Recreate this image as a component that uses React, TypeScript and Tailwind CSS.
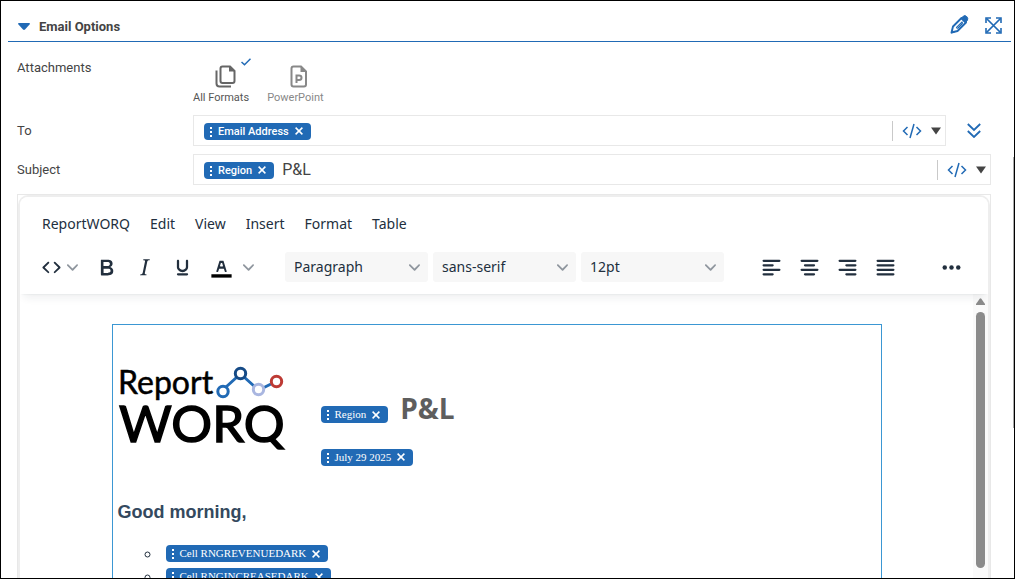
import React from 'react'
import type { ReactNode } from 'react'

const CHEVRON = 'M8.7 2.2c.3-.3.8-.3 1 0 .4.4.4.9 0 1.2L5.7 7.8c-.3.3-.9.3-1.2 0L.2 3.4a.8.8 0 0 1 0-1.2c.3-.3.8-.3 1.1 0L5 6l3.7-3.8Z'

const menus = ['ReportWORQ', 'Edit', 'View', 'Insert', 'Format', 'Table']

const formatButtons = [
  {
    label: 'Bold',
    d: 'M7.8 19c-.3 0-.5 0-.6-.2l-.2-.5V5.7c0-.2 0-.4.2-.5l.6-.2h5c1.5 0 2.7.3 3.5 1 .7.6 1.1 1.4 1.1 2.5a3 3 0 0 1-.6 1.9c-.4.6-1 1-1.6 1.2.4.1.9.3 1.3.6s.8.7 1 1.2c.4.4.5 1 .5 1.6 0 1.3-.4 2.3-1.3 3-.8.7-2.1 1-3.8 1H7.8Zm5-8.3c.6 0 1.2-.1 1.6-.5.4-.3.6-.7.6-1.3 0-1.1-.8-1.7-2.3-1.7H9.3v3.5h3.4Zm.5 6c.7 0 1.3-.1 1.7-.4.4-.4.6-.9.6-1.5s-.2-1-.7-1.4c-.4-.3-1-.4-2-.4H9.4v3.8h4Z',
  },
  {
    label: 'Italic',
    d: 'm16.7 4.7-.1.9h-.3c-.6 0-1 0-1.4.3-.3.3-.4.6-.5 1.1l-2.1 9.8v.6c0 .5.4.8 1.4.8h.2l-.2.8H8l.2-.8h.2c1.1 0 1.8-.5 2-1.5l2-9.8.1-.5c0-.6-.4-.8-1.4-.8h-.3l.2-.9h5.8Z',
  },
  {
    label: 'Underline',
    d: 'M16 5c.6 0 1 .4 1 1v5.5a4 4 0 0 1-.4 1.8l-1 1.4a5.3 5.3 0 0 1-5.5 1 5 5 0 0 1-1.6-1c-.5-.4-.8-.9-1.1-1.4a4 4 0 0 1-.4-1.8V6c0-.6.4-1 1-1s1 .4 1 1v5.5c0 .3 0 .6.2 1l.6.7a3.3 3.3 0 0 0 2.2.8 3.4 3.4 0 0 0 2.2-.8c.3-.2.4-.5.6-.8l.2-.9V6c0-.6.4-1 1-1ZM8 17h8c.6 0 1 .4 1 1s-.4 1-1 1H8a1 1 0 0 1 0-2Z',
  },
]

const TEXT_COLOR =
  'M8.7 16h-.8a.5.5 0 0 1-.5-.6l2.7-9c.1-.3.3-.4.5-.4h2.8c.2 0 .4.1.5.4l2.7 9a.5.5 0 0 1-.5.6h-.8a.5.5 0 0 1-.4-.4l-.7-2.2c0-.3-.3-.4-.5-.4h-3.4c-.2 0-.4.1-.5.4l-.7 2.2c0 .3-.2.4-.4.4Zm2.6-7.6-.6 2a.5.5 0 0 0 .5.6h1.6a.5.5 0 0 0 .5-.6l-.6-2c0-.3-.3-.4-.5-.4h-.4c-.2 0-.4.1-.5.4Z'

const SOURCE =
  'M9.8 15.7c.3.3.3.8 0 1-.3.4-.9.4-1.2 0l-4.4-4.1a.8.8 0 0 1 0-1.2l4.4-4.2c.3-.3.9-.3 1.2 0 .3.3.3.8 0 1.1L6 12l3.8 3.7ZM14.2 15.7c-.3.3-.3.8 0 1 .4.4.9.4 1.2 0l4.4-4.1c.3-.3.3-.9 0-1.2l-4.4-4.2a.8.8 0 0 0-1.2 0c-.3.3-.3.8 0 1.1L18 12l-3.8 3.7Z'

// start x and end x of the two short lines
const alignButtons = [
  { label: 'Align left', x1: 5, x2: 13 },
  { label: 'Align center', x1: 8, x2: 16 },
  { label: 'Align right', x1: 11, x2: 19 },
  { label: 'Justify', x1: 5, x2: 19 },
]

const toolbarSelects = [
  { label: 'Blocks', value: 'Paragraph' },
  { label: 'Fonts', value: 'sans-serif' },
  { label: 'Font sizes', value: '12pt' },
]

const Chip = ({ children }: { children: ReactNode }) => (
  <span className="inline-flex h-[17px] shrink-0 items-center rounded bg-[#216ab5] pl-[5px] pr-2 text-[11px] leading-none whitespace-nowrap text-white">
    <svg className="mr-[5px] h-[11px] w-1" viewBox="0 0 4 11" fill="currentColor" aria-hidden="true">
      <path d="M1 1h2v2H1zM1 5h2v2H1zM1 9h2v2H1z" />
    </svg>
    {children}
    <button type="button" aria-label="Remove" className="ml-1.5">
      <svg className="h-2 w-2" viewBox="0 0 8 8" fill="none" stroke="currentColor" strokeWidth="1.5" aria-hidden="true">
        <path d="M.6.6l6.8 6.8M7.4.6L.6 7.4" />
      </svg>
    </button>
  </span>
)

const Chevron = () => (
  <svg className="h-[11px] w-[11px] shrink-0 fill-[#8f969e]" viewBox="0 0 10 10" aria-hidden="true">
    <path d={CHEVRON} />
  </svg>
)

const ToolIcon = ({ children }: { children: ReactNode }) => (
  <svg className="h-[27px] w-[27px] shrink-0" viewBox="0 0 24 24" fill="currentColor" aria-hidden="true">
    {children}
  </svg>
)

const CodeMenu = () => (
  <div className="flex h-5 items-center border-l border-[#c9c9c9] pr-1 pl-[9px]">
    <button type="button" aria-label="Insert code">
      <svg className="h-4 w-5 text-[#216ab5]" viewBox="0 0 20 16" fill="none" stroke="currentColor" strokeWidth="1.5" aria-hidden="true">
        <path d="M5.500 4L1.500 8l4 4M14.500 4l4 4-4 4M12 1L8 15" />
      </svg>
    </button>
    <button type="button" aria-label="More code options" className="ml-[9px]">
      <svg className="h-2 w-2.5 fill-[#444]" viewBox="0 0 10 8" aria-hidden="true">
        <path d="M0 .5h10L5 7.500z" />
      </svg>
    </button>
  </div>
)

const Logo = () => (
  <svg className="h-[85px] w-[170px] overflow-visible" viewBox="0 0 170 85" role="img" aria-label="ReportWORQ">
    <g fill="#000" stroke="#000" fontFamily="Lato, sans-serif">
      <text x="0" y="29" fontSize="32" strokeWidth="0.5">Report</text>
      <text x="1" y="77" fontSize="51" strokeWidth="1.500">WORQ</text>
    </g>
    <g fill="none" strokeWidth="3">
      <path d="M108 22l11-10M126 12l10 9M145 23l8-4" stroke="#216ab5" />
      <circle cx="105" cy="26.500" r="5.200" stroke="#216ab5" />
      <circle cx="122.500" cy="8.500" r="5.200" stroke="#154a86" />
      <circle cx="140.500" cy="24.500" r="5.200" stroke="#a9b6e0" />
      <circle cx="158.500" cy="16.500" r="5.200" stroke="#bd3a34" />
    </g>
  </svg>
)

const Header = () => (
  <header className="ml-[7px] mr-[3px] flex h-[41px] shrink-0 items-center border-b border-[#216ab5] pt-[11px] pl-2.5 pr-[9px]">
    <button type="button" className="flex items-center gap-[9px] text-[13px] font-bold text-[#444]">
      <svg className="h-[7px] w-3 fill-[#216ab5]" viewBox="0 0 12 7" aria-hidden="true">
        <path d="M0 1Q0 0 1 0h10q1 0 1 1L7 6.500q-1 .8-2 0z" />
      </svg>
      Email Options
    </button>
    <div className="ml-auto flex items-center gap-4 pb-1 text-[#216ab5]">
      <button type="button" aria-label="Edit">
        <svg className="h-[19px] w-[19px]" viewBox="0 0 19 19" fill="none" stroke="currentColor" aria-hidden="true">
          <path d="M1.500 17.500l1.500-6L11.500 3l4.500 4.500L7.500 16z" strokeWidth="1.900" strokeLinejoin="round" />
          <path d="M11 3.500l2.500-2.500q1.500-1 3.200.6t.8 3.400L15.500 8z" fill="currentColor" />
          <path d="M.8 18.500l1.200-4 2.800 3z" fill="currentColor" stroke="none" />
          <path d="M6.500 12.300l5.500-5.300q1 1 0 2L8 13q-1 .8-1.500-.7z" strokeWidth="1.100" />
        </svg>
      </button>
      <button type="button" aria-label="Expand" className="pt-px">
        <svg className="h-[17px] w-[17px]" viewBox="0 0 17 17" fill="none" stroke="currentColor" strokeWidth="1.600" aria-hidden="true">
          <path d="M6 1H1v5M11 1h5v5M1 11v5h5M16 11v5h-5" />
          <path d="M1.500 1.500l14 14M15.500 1.500l-14 14" strokeWidth="1.700" />
        </svg>
      </button>
    </div>
  </header>
)

const Attachments = () => (
  <div className="flex h-[73px] text-[11px] leading-4">
    <div className="w-[176px] pt-4 text-[13px] leading-5">Attachments</div>
    <div className="flex gap-[18px] pt-[23px]">
      <button type="button" aria-pressed="true" className="relative flex h-[41px] flex-col items-center justify-between text-[#555]">
        <svg className="ml-2 h-[23px] w-[21px] text-[#666]" viewBox="0 0 21 23" fill="none" stroke="currentColor" strokeWidth="2" aria-hidden="true">
          <path d="M7.500 1.500h7.500L19.500 6v10q0 2-2 2h-10q-2 0-2-2V3.500q0-2 2-2z" />
          <path d="M1.500 5.500V18.500q0 3 3 3H16" />
          <path d="M14 1v5.500h5.500z" fill="currentColor" stroke="none" />
        </svg>
        All Formats
        <svg className="absolute -top-[7px] -right-0.5 h-2 w-2.5 text-[#216ab5]" viewBox="0 0 10 8" fill="none" stroke="currentColor" strokeWidth="1.500" aria-hidden="true">
          <path d="M.5 4L3.500 6.800 9.500.8" />
        </svg>
      </button>
      <button type="button" aria-pressed="false" className="flex h-[41px] flex-col items-center justify-between text-[#888]">
        <svg className="ml-2 h-[23px] w-[18px]" viewBox="0 0 18 23" fill="none" stroke="currentColor" strokeWidth="2" aria-hidden="true">
          <path d="M3.500 1.500h7.500L16 6.500v13q0 2-2 2H3.500q-2 0-2-2v-16q0-2 2-2z" />
          <path d="M10.500 1v6h6z" fill="currentColor" stroke="none" />
          <path d="M6.500 18v-7.500h2.500q2.500 0 2.500 2.200T9 15H6.500" />
        </svg>
        PowerPoint
      </button>
    </div>
  </div>
)

const Toolbar = () => (
  <div className="flex h-[52px] items-center pb-0.5 pl-[18px]">
    <button type="button" aria-label="Source code" className="mr-[9px] flex items-center gap-0.5">
      <ToolIcon>
        <path d={SOURCE} />
      </ToolIcon>
      <Chevron />
    </button>
    {formatButtons.map((b) => (
      <button key={b.label} type="button" aria-label={b.label} className="flex w-[38px] justify-center">
        <ToolIcon>
          <path d={b.d} />
        </ToolIcon>
      </button>
    ))}
    <button type="button" aria-label="Text color" className="mr-[31px] ml-[7px] flex items-center gap-2">
      <ToolIcon>
        <path d="M3 18h18v3H3z" fill="#000" />
        <path d={TEXT_COLOR} />
      </ToolIcon>
      <Chevron />
    </button>
    <div className="flex gap-[5px]">
      {toolbarSelects.map((s) => (
        <label key={s.label} className="grid w-[143px] grid-cols-1 items-center rounded-[3px] bg-[#f7f7f7]">
          <select
            aria-label={s.label}
            className="col-start-1 row-start-1 h-[30px] w-full appearance-none bg-transparent pl-[9px] text-sm outline-none"
          >
            <option>{s.value}</option>
          </select>
          <span className="pointer-events-none col-start-1 row-start-1 mr-2 justify-self-end">
            <Chevron />
          </span>
        </label>
      ))}
    </div>
    <div className="mr-7 ml-7 flex">
      {alignButtons.map((b) => (
        <button key={b.label} type="button" aria-label={b.label} className="flex w-[38px] justify-center">
          <ToolIcon>
            <path
              d={`M5 6h14M${b.x1} 10H${b.x2}M5 14h14M${b.x1} 18H${b.x2}`}
              stroke="currentColor"
              strokeWidth="2"
              strokeLinecap="round"
            />
          </ToolIcon>
        </button>
      ))}
    </div>
    <button type="button" aria-label="More" className="flex w-[38px] justify-center">
      <ToolIcon>
        <circle cx="6" cy="12" r="2" />
        <circle cx="12" cy="12" r="2" />
        <circle cx="18" cy="12" r="2" />
      </ToolIcon>
    </button>
  </div>
)

const Message = () => (
  <div className="mx-auto mt-[30px] h-[600px] w-full max-w-[770px] border border-[#3b97d3] px-[5px] pt-10 font-['Liberation_Serif',serif] text-base">
    <div className="flex">
      <div className="w-[203px]">
        <Logo />
      </div>
      <div className="pt-6">
        <div className="flex h-10 items-center gap-3">
          <div className="pt-3">
            <Chip>Region</Chip>
          </div>
          <h1 className="pb-0.5 font-['Open_Sans',sans-serif] text-[28px] leading-9 font-bold text-[#5e5e5e]">P&amp;L</h1>
        </div>
        <div className="flex h-14 items-center">
          <Chip>July 29 2025</Chip>
        </div>
      </div>
    </div>
    <p className="mt-[15px] font-['Liberation_Sans',sans-serif] text-lg leading-6 font-bold text-[#34495e]">Good morning,</p>
    <ul className="mt-[18px] list-[circle] pl-[43px] leading-[23px]">
      <li className="pl-[5px]">
        <Chip>Cell RNGREVENUEDARK</Chip>
      </li>
      <li className="pl-[5px]">
        <Chip>Cell RNGINCREASEDARK</Chip>
      </li>
    </ul>
  </div>
)

const Editor = () => (
  <section className="mt-[9px] flex min-h-0 flex-1 flex-col border border-b-0 border-[#e8e8e8]">
    <div className="flex min-h-0 flex-1 flex-col overflow-hidden rounded-t-[10px] border-2 border-b-0 border-[#eee] font-['Noto_Sans',sans-serif] text-[#222f3e]">
      <div className="relative z-10 bg-white shadow-[0_2px_2px_-2px_rgba(34,47,62,0.1),0_8px_8px_-4px_rgba(34,47,62,0.07)]">
        <nav className="flex h-[45px] items-end gap-5 pl-[22px] text-sm">
          {menus.map((m) => (
            <button key={m} type="button" className="h-9">
              {m}
            </button>
          ))}
        </nav>
        <Toolbar />
      </div>
      <div className="flex min-h-0 flex-1">
        <div className="min-w-0 flex-1 overflow-hidden">
          <Message />
        </div>
        {/* Scrollbar */}
        <div className="flex w-[15px] flex-col items-center gap-[7px] bg-[#fafafa] pt-1 pb-2.5">
          <svg className="h-[7px] w-[9px] shrink-0 fill-[#8b8b8b]" viewBox="0 0 9 7" aria-hidden="true">
            <path d="M3.700.8q.8-1 1.600 0L9 6v1H0V6z" />
          </svg>
          <div className="w-[9px] flex-1 rounded-full bg-[#8b8b8b]" />
        </div>
      </div>
    </div>
  </section>
)

const App = () => {
  return (
    <main className="relative flex h-screen flex-col overflow-hidden border border-black bg-white font-[Roboto,sans-serif] text-[13px] text-[#444]">
      <Header />
      <div className="flex min-h-0 flex-1 flex-col pr-[23px] pl-4">
        <Attachments />
        <div className="flex items-center">
          <label htmlFor="to" className="w-[176px]">To</label>
          <div className="flex h-[31px] flex-1 items-center border border-[#e8e8e8] pt-px pl-2.5">
            <Chip>
              <span className="font-medium">Email Address</span>
            </Chip>
            <input id="to" type="text" className="ml-2 min-w-0 flex-1 text-base outline-none" />
            <CodeMenu />
          </div>
          <button type="button" aria-label="Show more recipients" className="mr-2.5 ml-[21px] text-[#216ab5]">
            <svg className="h-[15px] w-3.5" viewBox="0 0 14 15" fill="none" stroke="currentColor" strokeWidth="1.800" aria-hidden="true">
              <path d="M.8 1L7 7l6.200-6M.8 8L7 14l6.200-6" />
            </svg>
          </button>
        </div>
        <div className="mt-2 flex items-center">
          <label htmlFor="subject" className="w-[176px]">Subject</label>
          <div className="flex h-[31px] flex-1 items-center border border-[#e8e8e8] pt-px pl-2.5">
            <Chip>
              <span className="font-medium">Region</span>
            </Chip>
            <input id="subject" type="text" defaultValue="P&L" className="ml-2 min-w-0 flex-1 text-base outline-none" />
            <CodeMenu />
          </div>
        </div>
        <Editor />
      </div>
      <div className="absolute top-[27%] right-0 h-[47%] w-px bg-[#aaa]" />
    </main>
  )
}

export default App
